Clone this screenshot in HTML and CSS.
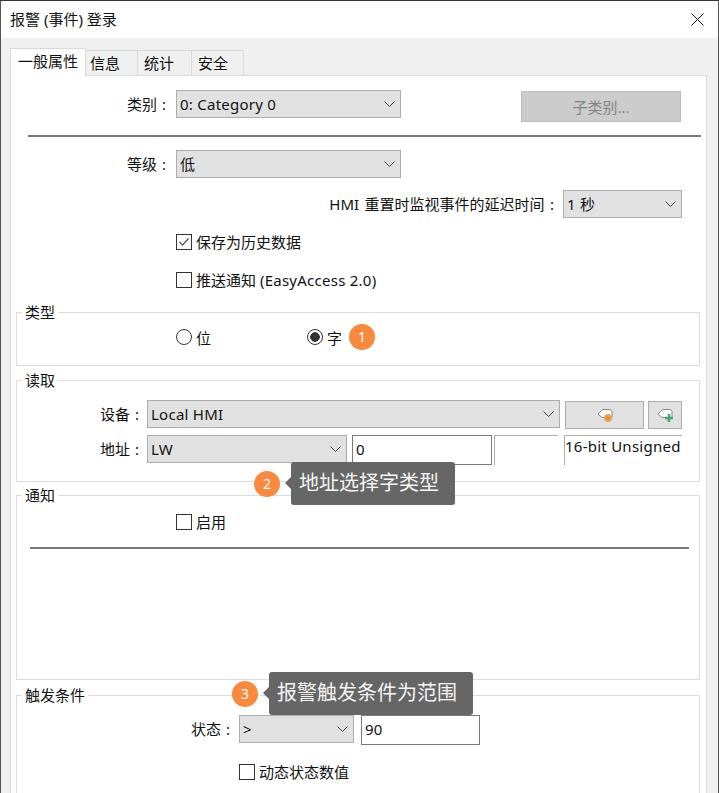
FILE: index.html
```html
<!DOCTYPE html>
<html lang="zh-CN">
<head>
  <meta charset="UTF-8" />
  <title>报警 (事件) 登录</title>
  <link rel="stylesheet" href="styles.css">
</head>
<body>
  <div class="window">
    <div class="titlebar">
      <span class="title">报警 (事件) 登录</span>
      <svg class="close" width="13" height="13" viewBox="0 0 13 13"><path d="M.5.5l12 12M12.500.5l-12 12" stroke="#111" fill="none"/></svg>
    </div>

    <div class="tabs">
      <div class="tab active">一般属性</div>
      <div class="tab t2">信息</div>
      <div class="tab t3">统计</div>
      <div class="tab t4">安全</div>
    </div>

    <div class="panel">
      <div class="row r-category">
        <label class="lbl">类别 :</label>
        <div class="select w-225">0: Category 0<svg class="chev" width="11" height="6" viewBox="0 0 11 6"><path d="M.5.5l5 5 5-5" stroke="#444" fill="none"/></svg></div>
        <button class="sub-btn">子类别...</button>
      </div>
      <div class="sep sep-top"></div>
      <div class="row r-level">
        <label class="lbl">等级 :</label>
        <div class="select w-225">低<svg class="chev" width="11" height="6" viewBox="0 0 11 6"><path d="M.5.5l5 5 5-5" stroke="#444" fill="none"/></svg></div>
      </div>
      <div class="row r-delay">
        <label>HMI 重置时监视事件的延迟时间 :</label>
        <div class="select w-119">1 秒<svg class="chev" width="11" height="6" viewBox="0 0 11 6"><path d="M.5.5l5 5 5-5" stroke="#444" fill="none"/></svg></div>
      </div>
      <div class="check r-save"><span class="box"><svg width="14" height="14" viewBox="0 0 14 14"><path d="M2.500 7l3 3 6-6.500" stroke="#555" stroke-width="1.300" fill="none"/></svg></span>保存为历史数据</div>
      <div class="check r-push"><span class="box"></span>推送通知 <span class="latin">(EasyAccess 2.0)</span></div>

      <fieldset class="group g-type">
        <legend>类型</legend>
        <div class="radios">
          <div class="radio r-bit"><span class="dot"></span>位</div>
          <div class="radio"><span class="dot on"></span>字</div>
          <span class="badge b1">1</span>
        </div>
      </fieldset>

      <fieldset class="group g-read">
        <legend>读取</legend>
        <div class="row r-device">
          <label class="lbl-sm">设备 :</label>
          <div class="select w-413">Local HMI<svg class="chev" width="11" height="6" viewBox="0 0 11 6"><path d="M.5.5l5 5 5-5" stroke="#444" fill="none"/></svg></div>
          <button class="icon-btn w-79"><svg width="22" height="16" viewBox="0 0 22 16"><path d="M8.500 2.500h8l1.500 2v6h-10l-4-3.500z" fill="#fff" stroke="#888"/><circle cx="14" cy="11" r="4" fill="#eaa24c"/><circle cx="14" cy="11" r="1.800" fill="#d88f38"/></svg></button>
          <button class="icon-btn w-34"><svg width="22" height="16" viewBox="0 0 22 16"><path d="M8.500 2.500h8l1.500 2v6h-10l-4-3.500z" fill="#fff" stroke="#888"/><path d="M15 7v8M11 11h8" stroke="#3fa96f" stroke-width="2.500"/></svg></button>
        </div>
        <div class="row r-address">
          <label class="lbl-sm">地址 :</label>
          <div class="select w-200">LW<svg class="chev" width="11" height="6" viewBox="0 0 11 6"><path d="M.5.5l5 5 5-5" stroke="#444" fill="none"/></svg></div>
          <div class="input w-140">0</div>
          <div class="open-field w-64"></div>
          <div class="open-field w-118">16-bit Unsigned</div>
          <div class="tip tip-2"><span class="badge">2</span><div class="tip-box">地址选择字类型</div></div>
        </div>
      </fieldset>

      <fieldset class="group g-notify">
        <legend>通知</legend>
        <div class="check r-enable"><span class="box"></span>启用</div>
        <div class="sep sep-notify"></div>
      </fieldset>

      <fieldset class="group g-trigger">
        <legend>触发条件</legend>
        <div class="row r-state">
          <label class="lbl-state">状态 :</label>
          <div class="select w-115">&gt;<svg class="chev" width="11" height="6" viewBox="0 0 11 6"><path d="M.5.5l5 5 5-5" stroke="#444" fill="none"/></svg></div>
          <div class="input w-119">90</div>
          <div class="tip tip-3"><span class="badge">3</span><div class="tip-box">报警触发条件为范围</div></div>
        </div>
        <div class="check r-dynamic"><span class="box"></span>动态状态数值</div>
      </fieldset>
    </div>
  </div>
</body>
</html>
```
FILE: styles.css
```css
* { box-sizing: border-box; }

html, body {
  margin: 0;
  height: 793px;
  overflow: hidden;
}

body {
  background-color: #f0f0f0;
  color: #111;
  font-family: 'Noto Sans', 'Noto Sans CJK SC', sans-serif;
  font-size: 15px;
}

.window {
  height: 793px;
  border-top: 1px solid #333;
  border-left: 1px solid #555;
  border-right: 1px solid #555;
  background-color: #f0f0f0;
  overflow: hidden;
}

.titlebar {
  height: 37px;
  background-color: white;
  display: flex;
  align-items: center;
  justify-content: space-between;
  padding: 0 14px 0 9px;
}

.title { margin-top: -3px; }
.close { margin-top: -1px; }

.tabs {
  display: flex;
  align-items: flex-end;
  height: 37px;
  padding-left: 9px;
}

.tab {
  height: 26px;
  padding-left: 6px;
  border: 1px solid #d9d9d9;
  border-bottom: none;
  border-left: none;
  line-height: 24px;
  margin-bottom: -1px;
}

.tab.active {
  width: 76px;
  height: 28px;
  padding-left: 7px;
  background-color: white;
  border-left: 1px solid #d9d9d9;
  position: relative;
  z-index: 1;
  line-height: 24px;
}

.t2 { width: 52px; padding-left: 4px; }
.t3 { width: 54px; }
.t4 { width: 52px; }

.panel {
  width: 697px;
  margin-left: 9px;
  height: 760px;
  background-color: white;
  border: 1px solid #d9d9d9;
  padding-top: 14px;
}

.row {
  display: flex;
  align-items: flex-start;
}

.row label {
  line-height: 28px;
  white-space: nowrap;
  word-spacing: 1px;
}

.lbl {
  width: 155px;
  margin-right: 10px;
  text-align: right;
}

.select {
  position: relative;
  height: 28px;
  flex: none;
  background-color: #e1e1e1;
  border: 1px solid #adadad;
  padding-left: 3px;
  line-height: 26px;
  letter-spacing: .25px;
}

.chev {
  position: absolute;
  right: 5px;
  top: 10px;
}

.w-225 { width: 225px; }
.w-119 { width: 119px; }
.w-413 { width: 413px; }
.w-200 { width: 200px; }
.w-115 { width: 115px; }
.w-140 { width: 140px; }
.w-64 { width: 64px; }
.w-118 { width: 118px; }
.w-79 { width: 79px; }
.w-34 { width: 34px; }

.sub-btn {
  width: 160px;
  height: 31px;
  margin: 1px 0 0 120px;
  background-color: #cccccc;
  border: 1px solid #bdbdbd;
  color: #838383;
  font: inherit;
}

.sep {
  height: 2px;
  background-color: #777;
}

.sep-top { margin: 13px 5px 13px 17px; }

.r-delay {
  justify-content: flex-end;
  margin: 12px 24px 0 0;
}

.r-delay label {
  margin-right: 9px;
  word-spacing: 1.500px;
}

.latin { letter-spacing: .25px; }

.check {
  display: flex;
  align-items: center;
  height: 16px;
  line-height: 16px;
  white-space: pre;
}

.box {
  width: 16px;
  height: 16px;
  flex: none;
  margin-right: 4px;
  border: 1px solid #333;
  background-color: white;
}

.box svg { display: block; }

.r-save { margin: 16px 0 0 165px; }
.r-push { margin: 22px 0 0 165px; }

.group {
  margin: 0 6px 0 5px;
  padding: 0;
  min-width: 0;
  border: 1px solid #dcdcdc;
}

.group legend {
  margin-left: 5px;
  padding: 0 3px;
  line-height: 20px;
}

.g-type { height: 64px; margin-top: 14px; }
.g-read { height: 112px; margin-top: 4px; }
.g-notify { height: 195px; margin-top: 3px; }
.g-trigger { height: 120px; margin-top: 5px; }

.radios {
  display: flex;
  align-items: center;
  height: 30px;
  padding-left: 159px;
}

.radio {
  display: flex;
  align-items: center;
}

.r-bit { width: 131px; }

.dot {
  width: 16px;
  height: 16px;
  margin-right: 4px;
  border: 1px solid #333;
  border-radius: 50%;
  background-color: white;
}

.dot.on {
  background: radial-gradient(circle, #333 0, #333 4.500px, white 5px);
}

.badge {
  display: inline-block;
  width: 26px;
  height: 26px;
  border-radius: 50%;
  background-color: #f98a3d;
  color: #fff;
  text-align: center;
  line-height: 25px;
  font-size: 14px;
}

.b1 { margin-left: 7px; }

.r-device { margin-top: 10px; }
.r-address { margin-top: 6px; position: relative; }

.lbl-sm {
  width: 122px;
  margin-right: 8px;
  text-align: right;
}

.icon-btn {
  height: 28px;
  margin: 1px 0 0 5px;
  padding: 0;
  background-color: #e1e1e1;
  border: 1px solid #adadad;
  display: flex;
  align-items: center;
  justify-content: center;
}

.icon-btn + .icon-btn { margin-left: 4px; }

.input {
  height: 30px;
  flex: none;
  margin-left: 5px;
  padding-left: 3px;
  line-height: 26px;
  letter-spacing: .25px;
  background-color: white;
  border: 1px solid #7a7a7a;
}

.open-field {
  height: 30px;
  flex: none;
  margin-left: 2px;
  line-height: 20px;
  letter-spacing: .25px;
  border-top: 1px solid #adadad;
  border-left: 1px solid #adadad;
  white-space: nowrap;
}

.open-field + .open-field { margin-left: 6px; }

.tip {
  position: absolute;
  display: flex;
  align-items: center;
}

.tip-box {
  position: relative;
  margin-left: 11px;
  padding: 0 16px 0 8px;
  height: 43px;
  line-height: 41px;
  border-radius: 3px;
  background-color: #666;
  color: #f5f5f5;
  font-size: 20px;
  white-space: nowrap;
}

.tip-box::before {
  content: "";
  position: absolute;
  left: -6px;
  top: 15px;
  border-style: solid;
  border-width: 6px 6px 6px 0;
  border-color: transparent #666 transparent transparent;
}

.tip-2 { left: 237px; top: 27px; }
.tip-3 { left: 215px; top: -43px; }

.r-enable { margin: 9px 0 0 159px; }
.sep-notify { margin: 17px 10px 0 13px; }

.r-state { margin-top: 10px; position: relative; }

.lbl-state {
  width: 213px;
  margin-right: 9px;
  text-align: right;
}

.r-state .input { margin-left: 7px; }

.r-dynamic { margin: 19px 0 0 222px; }
```
